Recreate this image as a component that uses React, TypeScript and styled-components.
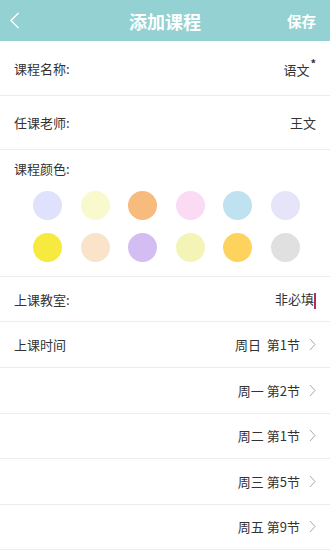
import styled, { createGlobalStyle } from "styled-components";

const GlobalStyle = createGlobalStyle`
    body {
        margin: 0;
        background: #ffffff;
        font-family: "Noto Sans CJK SC", "Noto Sans", sans-serif;
        color: #333333;
    }
`;

const Page = styled.div`
    width: 330px;
    height: 550px;
    overflow: hidden;
    background: #ffffff;
`;

const Header = styled.header`
    height: 41px;
    background: #93d1d2;
    display: grid;
    grid-template-columns: 60px 1fr 60px;
    align-items: center;
    color: #ffffff;
`;

const BackButton = styled.div`
    padding-left: 9px;
    display: flex;
    align-items: center;
`;

const Title = styled.h1`
    margin: 0;
    text-align: center;
    font-size: 18px;
    font-weight: 700;
`;

const SaveButton = styled.div`
    text-align: right;
    padding-right: 14px;
    font-size: 14.5px;
    font-weight: 700;
`;

const Row = styled.div<{ $height: number }>`
    height: ${(p) => p.$height}px;
    box-sizing: border-box;
    border-bottom: 1px solid #ececec;
    display: flex;
    align-items: center;
    justify-content: space-between;
    padding: 0 14px 0 14px;
    font-size: 13px;
`;

const Label = styled.span``;

const Value = styled.span`
    display: flex;
    align-items: center;
    gap: 9px;
`;

const TimeText = styled.span`
    white-space: pre;
`;

const Required = styled.sup`
    font-size: 11px;
    font-weight: 700;
    margin-left: 1px;
    position: relative;
    top: -2px;
`;

const Cursor = styled.span`
    display: inline-block;
    width: 2px;
    height: 16px;
    background: #b0305a;
    vertical-align: middle;
`;

const ColorSection = styled.div`
    box-sizing: border-box;
    height: 127px;
    border-bottom: 1px solid #ececec;
    padding: 9px 14px 0 14px;
    font-size: 13px;
`;

const Swatches = styled.div`
    display: grid;
    grid-template-columns: repeat(6, 47.6px);
    row-gap: 13px;
    justify-content: center;
    margin-top: 13px;
    margin-left: 3px;
`;

const Swatch = styled.div<{ $color: string }>`
    width: 29px;
    height: 29px;
    border-radius: 50%;
    background: ${(p) => p.$color};
    justify-self: center;
`;

const Chevron = () => (
    <svg width="7" height="13" viewBox="0 0 7 13">
        <path d="M1 1 L6 6.5 L1 12" fill="none" stroke="#a8a8a8" strokeWidth="1" />
    </svg>
);

const colors = [
    "#dfe1fd",
    "#f8f9cc",
    "#f6bb7d",
    "#fbdaf4",
    "#c0e1f0",
    "#e6e4f8",
    "#f8e93f",
    "#f9e3c9",
    "#d4bdf3",
    "#f3f4b6",
    "#fdd35e",
    "#e0e0e0",
];

const times = ["周日  第1节", "周一 第2节", "周二 第1节", "周三 第5节", "周五 第9节"];

export default function App() {
    return (
        <Page>
            <GlobalStyle />
            <Header>
                <BackButton>
                    <svg width="11" height="17" viewBox="0 0 11 17">
                        <path d="M9.5 1 L2 8.5 L9.5 16" fill="none" stroke="#ffffff" strokeWidth="1.4" />
                    </svg>
                </BackButton>
                <Title>添加课程</Title>
                <SaveButton>保存</SaveButton>
            </Header>
            <Row $height={55}>
                <Label>课程名称:</Label>
                <Value>
                    <span>
                        语文<Required>*</Required>
                    </span>
                </Value>
            </Row>
            <Row $height={54}>
                <Label>任课老师:</Label>
                <Value>王文</Value>
            </Row>
            <ColorSection>
                <Label>课程颜色:</Label>
                <Swatches>
                    {colors.map((c) => (
                        <Swatch key={c} $color={c} />
                    ))}
                </Swatches>
            </ColorSection>
            <Row $height={45}>
                <Label>上课教室:</Label>
                <Value>
                    <span>
                        非必填
                        <Cursor />
                    </span>
                </Value>
            </Row>
            {times.map((t, i) => (
                <Row $height={i === 0 ? 46 : 45.5} key={t}>
                    <Label>{i === 0 ? "上课时间" : ""}</Label>
                    <Value>
                        <TimeText>{t}</TimeText>
                        <Chevron />
                    </Value>
                </Row>
            ))}
        </Page>
    );
}
